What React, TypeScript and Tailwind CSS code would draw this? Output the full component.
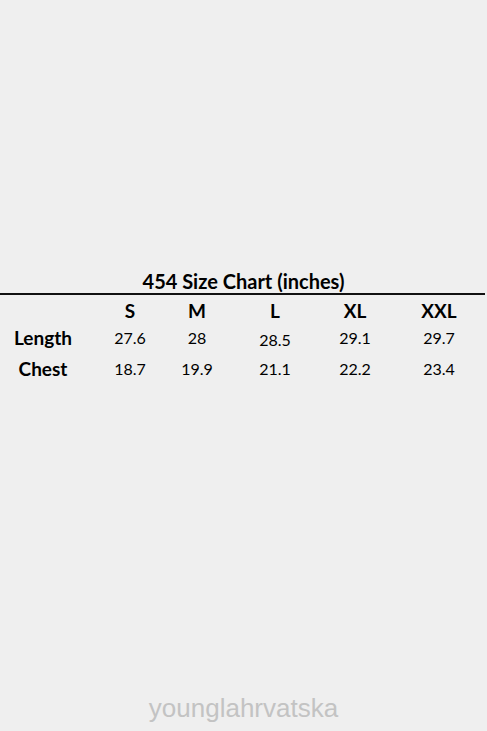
const rows = [
  { label: "Length", values: ["27.6", "28", "28.5", "29.1", "29.7"] },
  { label: "Chest", values: ["18.7", "19.9", "21.1", "22.2", "23.4"] },
];

const sizes = ["S", "M", "L", "XL", "XXL"];

export default function App() {
  return (
    <div className="relative h-[731px] w-full bg-[#efefef] text-black" style={{ fontFamily: "Lato, 'Noto Sans', sans-serif" }}>
      <div className="pt-[269px]">
        <h1 className="text-center text-[20px] font-bold leading-[24px]">454 Size Chart (inches)</h1>
        <div className="mr-[2px] h-[2px] bg-[#111]" />
        <div className="grid grid-cols-[86px_88px_46px_110px_50px_118px] text-center">
          <div className="h-[29px]" />
          {sizes.map((s) => (
            <div key={s} className="pt-[2px] text-[19px] font-bold leading-[27px]">{s}</div>
          ))}
          {rows.map((r) => (
            <div key={r.label} className="contents">
              <div className="text-[19px] font-bold leading-[28.5px]">{r.label}</div>
              {r.values.map((v, i) => (
                <div key={i} className={`text-[16px] leading-[28.5px] ${v === "28.5" ? "pt-[2px]" : ""}`}>{v}</div>
              ))}
            </div>
          ))}
        </div>
      </div>
      <div className="absolute bottom-[3px] left-0 right-0 text-center text-[26px] text-[#c3c3c3]" style={{ fontFamily: "'Liberation Sans', Arial, sans-serif" }}>
        younglahrvatska
      </div>
    </div>
  );
}
